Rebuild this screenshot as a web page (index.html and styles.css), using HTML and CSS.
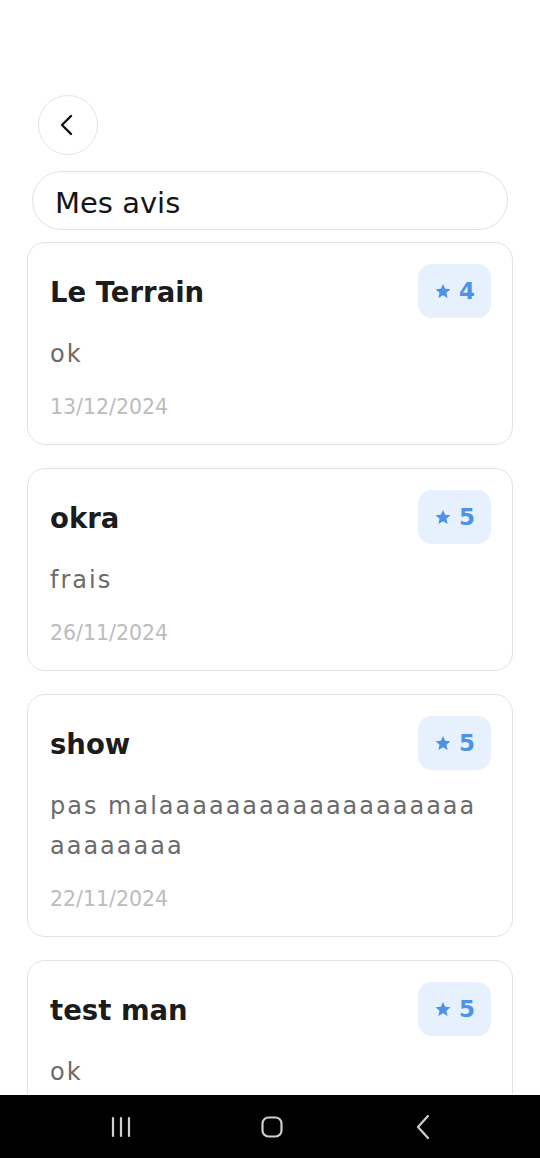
FILE: index.html
```html
<!DOCTYPE html>
<html lang="fr">
<head>
<meta charset="utf-8">
<title>Mes avis</title>
<link rel="stylesheet" href="styles.css">
</head>
<body>
<div class="screen">
  <button class="back" aria-label="Retour">
    <svg width="20" height="24" viewBox="0 0 20 24"><path d="M14 3 L5 12 L14 21" fill="none" stroke="#111" stroke-width="2.4" stroke-linecap="round" stroke-linejoin="round"/></svg>
  </button>
  <div class="title-box">Mes avis</div>
  <div class="list">
    <div class="card">
      <div class="card-head">
        <div class="card-title">Le Terrain</div>
        <div class="badge"><svg class="star" viewBox="0 0 24 24"><path d="M12 2.5l2.9 6.6 7.1.6-5.4 4.7 1.6 7-6.2-3.7-6.2 3.7 1.6-7L2 9.7l7.1-.6z"/></svg><span>4</span></div>
      </div>
      <div class="card-body">ok</div>
      <div class="card-date">13/12/2024</div>
    </div>
    <div class="card">
      <div class="card-head">
        <div class="card-title">okra</div>
        <div class="badge"><svg class="star" viewBox="0 0 24 24"><path d="M12 2.5l2.9 6.6 7.1.6-5.4 4.7 1.6 7-6.2-3.7-6.2 3.7 1.6-7L2 9.7l7.1-.6z"/></svg><span>5</span></div>
      </div>
      <div class="card-body">frais</div>
      <div class="card-date">26/11/2024</div>
    </div>
    <div class="card">
      <div class="card-head">
        <div class="card-title">show</div>
        <div class="badge"><svg class="star" viewBox="0 0 24 24"><path d="M12 2.5l2.9 6.6 7.1.6-5.4 4.7 1.6 7-6.2-3.7-6.2 3.7 1.6-7L2 9.7l7.1-.6z"/></svg><span>5</span></div>
      </div>
      <div class="card-body">pas malaaaaaaaaaaaaaaaaaaaaaaaaaaa</div>
      <div class="card-date">22/11/2024</div>
    </div>
    <div class="card card-cut">
      <div class="card-head">
        <div class="card-title">test man</div>
        <div class="badge"><svg class="star" viewBox="0 0 24 24"><path d="M12 2.5l2.9 6.6 7.1.6-5.4 4.7 1.6 7-6.2-3.7-6.2 3.7 1.6-7L2 9.7l7.1-.6z"/></svg><span>5</span></div>
      </div>
      <div class="card-body">ok</div>
    </div>
  </div>
</div>
<nav class="navbar">
  <div class="nav-item">
    <svg width="24" height="22" viewBox="0 0 24 22"><path d="M4 2v18M12 2v18M20 2v18" stroke="#cfcfcf" stroke-width="2.2" stroke-linecap="round"/></svg>
  </div>
  <div class="nav-item">
    <svg width="24" height="24" viewBox="0 0 24 24"><rect x="2.5" y="2.5" width="19" height="19" rx="6" fill="none" stroke="#cfcfcf" stroke-width="2.2"/></svg>
  </div>
  <div class="nav-item">
    <svg width="16" height="26" viewBox="0 0 16 26"><path d="M13 2 L3 13 L13 24" fill="none" stroke="#cfcfcf" stroke-width="2.2" stroke-linecap="round" stroke-linejoin="round"/></svg>
  </div>
</nav>
</body>
</html>
```

FILE: styles.css
```css
* { box-sizing: border-box; }

html, body {
  margin: 0;
  padding: 0;
}

body {
  width: 540px;
  height: 1158px;
  overflow: hidden;
  background: #ffffff;
  font-family: "DejaVu Sans", "Noto Sans", sans-serif;
  display: flex;
  flex-direction: column;
}

.screen {
  flex: 1;
  overflow: hidden;
  padding: 95px 27px 0 27px;
  display: flex;
  flex-direction: column;
}

.back {
  width: 60px;
  height: 60px;
  margin-left: 11px;
  border-radius: 50%;
  border: 1px solid #e4e4e4;
  background: #ffffff;
  padding: 0;
  display: flex;
  align-items: center;
  justify-content: center;
  flex-shrink: 0;
}

.back svg { margin-left: -2px; }

.title-box {
  margin: 16px 5px 0 5px;
  height: 59px;
  border: 1px solid #e2e2e2;
  border-radius: 30px;
  padding: 5px 0 0 22px;
  display: flex;
  align-items: center;
  font-size: 29px;
  color: #151515;
  flex-shrink: 0;
}

.list {
  margin-top: 12px;
  display: flex;
  flex-direction: column;
  gap: 23px;
}

.card {
  border: 1px solid #e2e2e2;
  border-radius: 18px;
  padding: 21px 21px 22px 22px;
  flex-shrink: 0;
}

.card-cut {
  padding-bottom: 80px;
}

.card-head {
  height: 54px;
  display: flex;
  align-items: center;
  justify-content: space-between;
}

.card-title {
  font-size: 27.5px;
  font-weight: 700;
  color: #1c1c1c;
  padding-top: 1px;
}

.badge {
  width: 73px;
  height: 54px;
  border-radius: 14px;
  background: #e6f1fd;
  display: flex;
  align-items: center;
  justify-content: center;
  gap: 7px;
  color: #4c93e6;
  font-size: 23px;
  font-weight: 700;
}

.star {
  width: 18px;
  height: 18px;
  fill: #4c93e6;
}

.card-body {
  margin-top: 16px;
  font-size: 24px;
  line-height: 40px;
  letter-spacing: 2px;
  color: #6b6b6b;
  word-break: break-all;
}

.card-date {
  margin-top: 18px;
  font-size: 20.5px;
  line-height: 30px;
  color: #bcbcbc;
}

.navbar {
  height: 63px;
  flex-shrink: 0;
  background: #000000;
  display: grid;
  grid-template-columns: repeat(3, 151px);
  justify-content: center;
  align-items: center;
  padding-left: 4px;
}

.nav-item {
  display: flex;
  justify-content: center;
  align-items: center;
}
```
